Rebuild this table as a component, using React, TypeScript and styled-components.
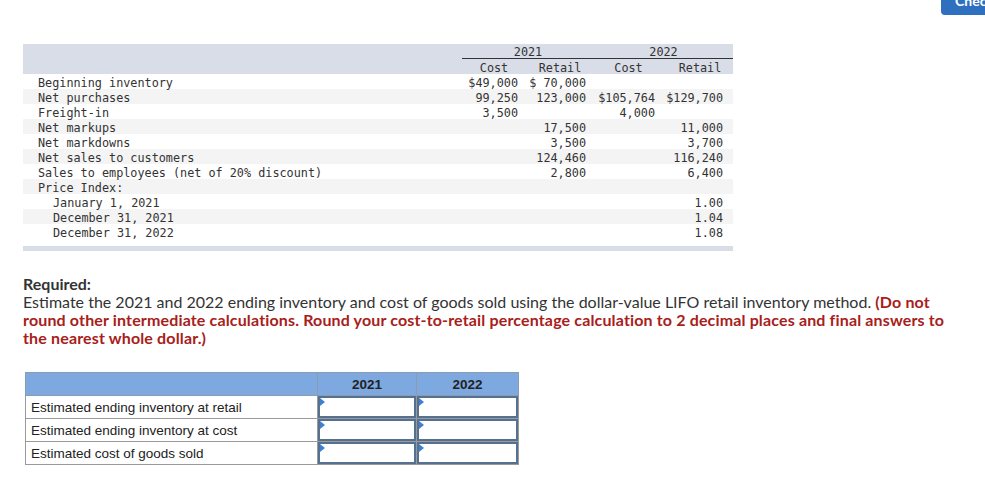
import React from "react";
import styled, { createGlobalStyle } from "styled-components";

const Global = createGlobalStyle`
  html, body { margin: 0; padding: 0; background: #fff; overflow: hidden; }
  body { width: 985px; height: 500px; }
`;

const Page = styled.div`
  padding-left: 23px;
  width: 962px;
`;

const TopBar = styled.div`
  height: 15px;
  display: flex;
  padding-left: 918px;
  margin-bottom: 29px;
`;

const CheckButton = styled.button`
  flex-shrink: 0;
  margin-top: -14px;
  height: 29px;
  padding: 0 14px;
  border: none;
  border-radius: 4px;
  background: #2f6fbf;
  color: #fff;
  font: bold 14px "Lato", "Liberation Sans", sans-serif;
  white-space: nowrap;
`;

const cols = "439px 64px 68px 69px 70px";

const DataTable = styled.div`
  width: 710px;
  font-family: "DejaVu Sans Mono", "Liberation Mono", monospace;
  font-size: 11.8px;
  color: #333;
`;

const HeadBand = styled.div`
  background: #d9dde7;
`;

const Row = styled.div<{ $shade?: boolean }>`
  display: grid;
  grid-template-columns: ${cols};
  height: 15px;
  line-height: 19px;
  background: ${(p) => (p.$shade ? "#f4f4f4" : "transparent")};
  white-space: pre;
`;

const YearCell = styled.div<{ $col: string }>`
  grid-column: ${(p) => p.$col};
  height: 14px;
  text-align: center;
  border-bottom: 1px solid #333;
  line-height: 17px;
`;

const HeadCell = styled.div<{ $col: number }>`
  grid-column: ${(p) => p.$col};
  text-align: center;
  padding-left: ${(p) => (p.$col === 5 ? 4 : 0)}px;
`;

const Label = styled.div<{ $indent?: boolean }>`
  padding-left: ${(p) => (p.$indent ? 30 : 15)}px;
`;

const Num = styled.div<{ $pad?: number }>`
  text-align: right;
  padding-right: ${(p) => p.$pad ?? 8}px;
`;

const BottomBar = styled.div`
  margin-top: 7px;
  height: 5px;
  background: #d9dde7;
`;

const Required = styled.div`
  margin-top: 24px;
  font-family: "Lato", "Open Sans", sans-serif;
  font-size: 16px;
  line-height: 18px;
  color: #333;
  width: 930px;
`;

const ReqTitle = styled.div`
  font-weight: bold;
`;

const Red = styled.span`
  color: #a8201a;
  font-weight: bold;
  letter-spacing: 0.15px;
`;

const AnswerTable = styled.table`
  margin-top: 25px;
  margin-left: 2px;
  border-collapse: collapse;
  font-family: "Liberation Sans", Arial, sans-serif;
  font-size: 13.5px;
  color: #222;
`;

const Th = styled.th<{ $w: number }>`
  width: ${(p) => p.$w}px;
  height: 22px;
  padding: 0;
  background: #7ea9e0;
  border: 1px solid #8c9cb0;
  font-weight: bold;
  text-align: center;
`;

const LabelTd = styled.td`
  height: 22px;
  padding: 0 0 0 5px;
  border: 1px solid #9a9a9a;
  white-space: nowrap;
`;

const InputTd = styled.td`
  padding: 0;
  border: 1px solid #9a9a9a;
`;

const InputBox = styled.div`
  position: relative;
  height: 18px;
  border: 2px solid #56718f;
  background: #fff;
`;

const Flag = styled.span`
  position: absolute;
  left: 0;
  top: 0;
  width: 0;
  height: 0;
  border-top: 4px solid transparent;
  border-bottom: 4px solid transparent;
  border-left: 5px solid #3d7fd0;
`;

type R = { label: string; v: [string, string, string, string]; indent?: boolean };

const rows: R[] = [
  { label: "Beginning inventory", v: ["$49,000", "$ 70,000", "", ""] },
  { label: "Net purchases", v: ["99,250", "123,000", "$105,764", "$129,700"] },
  { label: "Freight-in", v: ["3,500", "", "4,000", ""] },
  { label: "Net markups", v: ["", "17,500", "", "11,000"] },
  { label: "Net markdowns", v: ["", "3,500", "", "3,700"] },
  { label: "Net sales to customers", v: ["", "124,460", "", "116,240"] },
  { label: "Sales to employees (net of 20% discount)", v: ["", "2,800", "", "6,400"] },
  { label: "Price Index:", v: ["", "", "", ""] },
  { label: "January 1, 2021", v: ["", "", "", "1.00"], indent: true },
  { label: "December 31, 2021", v: ["", "", "", "1.04"], indent: true },
  { label: "December 31, 2022", v: ["", "", "", "1.08"], indent: true },
];

const pads = [8, 8, 8, 10];

const answers = [
  "Estimated ending inventory at retail",
  "Estimated ending inventory at cost",
  "Estimated cost of goods sold",
];

export default function App() {
  return (
    <>
      <Global />
      <Page>
        <TopBar>
          <CheckButton>Check my work</CheckButton>
        </TopBar>
        <DataTable>
          <HeadBand>
            <Row>
              <YearCell $col="2 / 4">2021</YearCell>
              <YearCell $col="4 / 6">2022</YearCell>
            </Row>
            <Row>
              <HeadCell $col={2}>Cost</HeadCell>
              <HeadCell $col={3}>Retail</HeadCell>
              <HeadCell $col={4}>Cost</HeadCell>
              <HeadCell $col={5}>Retail</HeadCell>
            </Row>
          </HeadBand>
          {rows.map((r, i) => (
            <Row key={r.label} $shade={i % 2 === 1}>
              <Label $indent={r.indent}>{r.label}</Label>
              {r.v.map((v, j) => (
                <Num key={j} $pad={pads[j]}>
                  {v}
                </Num>
              ))}
            </Row>
          ))}
          <BottomBar />
        </DataTable>
        <Required>
          <ReqTitle>Required:</ReqTitle>
          Estimate the 2021 and 2022 ending inventory and cost of goods sold using the dollar-value LIFO
          retail inventory method.{" "}
          <Red>
            (Do not round other intermediate calculations. Round your cost-to-retail percentage
            calculation to 2 decimal places and final answers to the nearest whole dollar.)
          </Red>
        </Required>
        <AnswerTable>
          <thead>
            <tr>
              <Th $w={291} />
              <Th $w={98}>2021</Th>
              <Th $w={101}>2022</Th>
            </tr>
          </thead>
          <tbody>
            {answers.map((a) => (
              <tr key={a}>
                <LabelTd>{a}</LabelTd>
                <InputTd>
                  <InputBox>
                    <Flag />
                  </InputBox>
                </InputTd>
                <InputTd>
                  <InputBox>
                    <Flag />
                  </InputBox>
                </InputTd>
              </tr>
            ))}
          </tbody>
        </AnswerTable>
      </Page>
    </>
  );
}
